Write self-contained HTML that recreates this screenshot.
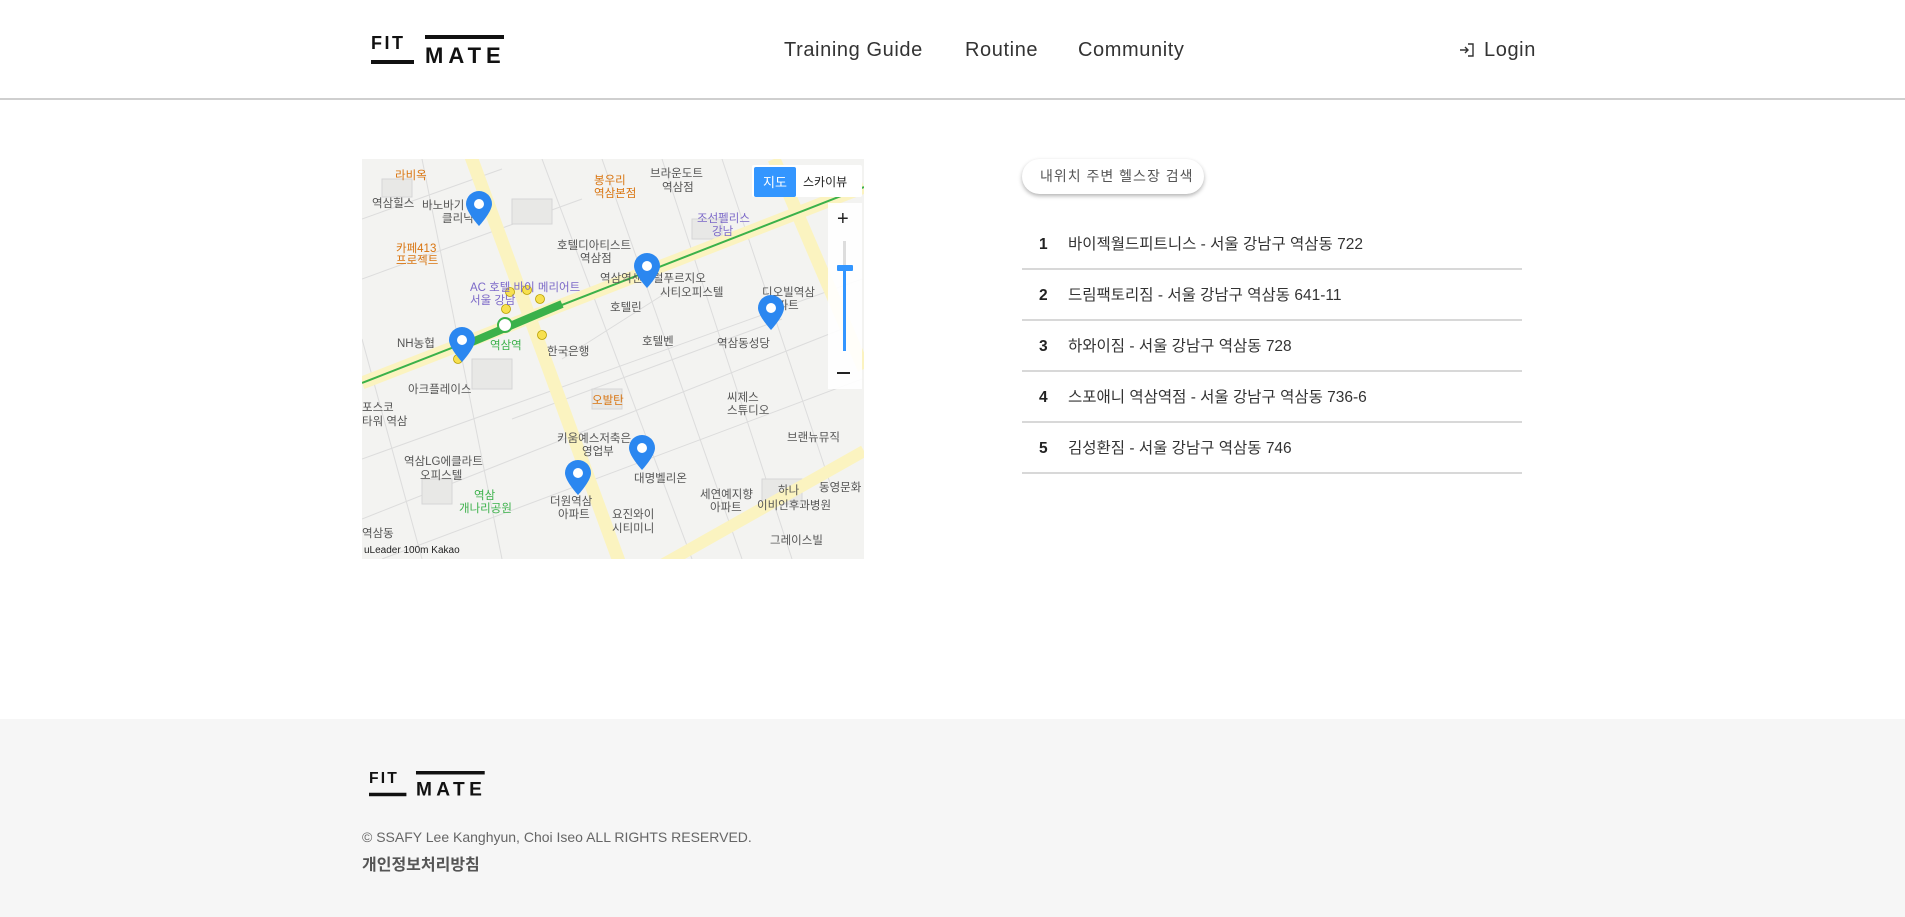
<!DOCTYPE html>
<html><head><meta charset="utf-8"><style>
*{margin:0;padding:0;box-sizing:border-box}
body{width:1905px;height:917px;overflow:hidden;background:#fff;font-family:"Liberation Sans","Noto Sans CJK KR",sans-serif;position:relative;color:#222}
.abs{position:absolute}
header{position:absolute;left:0;top:0;width:1905px;height:100px;border-bottom:2px solid #cfcfcf}
.logo{position:absolute;width:135px;height:32px}
.logo .fit{position:absolute;left:0;top:-2px;font-weight:bold;font-size:18px;letter-spacing:2.5px;color:#111}
.logo .ul{position:absolute;left:0;top:25px;width:43px;height:4px;background:#111}
.logo .ol{position:absolute;left:54px;top:0;width:79px;height:4px;background:#111}
.logo .mate{position:absolute;left:54px;top:10px;font-weight:bold;font-size:22px;letter-spacing:5px;color:#111;line-height:22px}
.nav{position:absolute;top:39px;font-size:20px;color:#333;letter-spacing:0.6px}
.btn{position:absolute;left:1022px;top:159px;width:182px;height:35px;border-radius:18px;background:#fff;box-shadow:0 2px 4px rgba(0,0,0,.3);font-size:14px;color:#555;line-height:35px;padding-left:18px;letter-spacing:1px}
.row{position:absolute;left:1022px;width:500px;height:51px;border-bottom:2px solid #d8d8d8;font-size:15.5px;color:#333;line-height:51px}
.row b{position:absolute;left:17px;font-weight:bold;color:#222}
.row span{position:absolute;left:46px}
footer{position:absolute;left:0;top:719px;width:1905px;height:198px;background:#f6f6f6}
.map text{font-family:"Liberation Sans","Noto Sans CJK KR",sans-serif}
</style></head><body>
<header>
<div class="logo" style="left:371px;top:35px"><div class="fit">FIT</div><div class="ul"></div><div class="ol"></div><div class="mate">MATE</div></div>
<div class="nav" style="left:784px">Training Guide</div>
<div class="nav" style="left:965px">Routine</div>
<div class="nav" style="left:1078px">Community</div>
<svg class="abs" style="left:1459px;top:42px" width="16" height="16" viewBox="0 0 16 16" fill="none" stroke="#333" stroke-width="1.4"><path d="M1 8h8M6 5l3 3-3 3M9 2h5v12H9"/></svg>
<div class="nav" style="left:1484px">Login</div>
</header>

<svg class="abs map" style="left:362px;top:159px" width="502" height="400" viewBox="0 0 502 400">
<rect width="502" height="400" fill="#f3f3f1"/>
<g stroke="#dcdcdc" stroke-width="1" fill="none">
<path d="M0 60L140 10M0 120L220 40M0 300L500 120M20 400L500 220M0 360L480 170M180 0L330 400M240 0L380 400M300 0L430 400M360 0L470 330M60 0L140 400M0 180L60 400M200 200L310 130M150 260L420 160"/>
</g>
<g fill="#e8e8e6" stroke="#d6d6d6">
<rect x="20" y="20" width="30" height="18"/><rect x="150" y="40" width="40" height="25"/><rect x="330" y="60" width="30" height="20"/><rect x="400" y="320" width="40" height="25"/><rect x="60" y="320" width="30" height="25"/><rect x="230" y="230" width="30" height="20"/><rect x="110" y="200" width="40" height="30"/>
</g>
<path d="M108 -5L258 405" stroke="#fbf3c0" stroke-width="13"/>
<path d="M412 0L502 210" stroke="#fbf3c0" stroke-width="13"/>
<path d="M0 224L502 28" stroke="#fbf3c0" stroke-width="13"/>
<path d="M0 224L502 28" stroke="#3bb14a" stroke-width="2"/>
<path d="M300 406L502 292" stroke="#fbf3c0" stroke-width="12"/>
<path d="M110 183L200 145" stroke="#3bb14a" stroke-width="8"/>
<circle cx="143" cy="166" r="7" fill="#fff" stroke="#3bb14a" stroke-width="2"/>
<g fill="#f7e050" stroke="#b9a000" stroke-width=".8"><circle cx="148" cy="133" r="4.5"/><circle cx="165" cy="131" r="4.5"/><circle cx="178" cy="140" r="4.5"/><circle cx="144" cy="150" r="4.5"/><circle cx="180" cy="176" r="4.5"/><circle cx="96" cy="200" r="4.5"/></g>
<g font-size="11.5" fill="#555">
<text x="10" y="48">역삼힐스</text><text x="60" y="50">바노바기</text><text x="80" y="63">클리닉</text>
<text x="195" y="90">호텔디아티스트</text><text x="218" y="103">역삼점</text>
<text x="288" y="18">브라운도트</text><text x="300" y="32">역삼점</text>
<text x="238" y="123">역삼역센트럴푸르지오</text><text x="298" y="137">시티오피스텔</text>
<text x="248" y="152">호텔린</text><text x="280" y="186">호텔벤</text><text x="355" y="188">역삼동성당</text>
<text x="185" y="196">한국은행</text><text x="46" y="234">아크플레이스</text><text x="0" y="252">포스코</text><text x="0" y="266">타워 역삼</text>
<text x="42" y="306">역삼LG에클라트</text><text x="58" y="320">오피스텔</text>
<text x="195" y="283">키움예스저축은</text><text x="220" y="296">영업부</text><text x="272" y="323">대명벨리온</text>
<text x="188" y="346">더원역삼</text><text x="196" y="359">아파트</text><text x="250" y="359">요진와이</text><text x="250" y="373">시티미니</text>
<text x="338" y="339">세연예지향</text><text x="348" y="352">아파트</text><text x="395" y="350">이비인후과병원</text><text x="416" y="335">하나</text><text x="457" y="332">동영문화</text>
<text x="408" y="385">그레이스빌</text><text x="0" y="378">역삼동</text><text x="365" y="242">씨제스</text><text x="365" y="255">스튜디오</text><text x="425" y="282">브랜뉴뮤직</text>
<text x="405" y="150">아파트</text><text x="400" y="137">디오빌역삼</text><text x="35" y="188">NH농협</text>
</g>
<g font-size="11.5" fill="#d9740f"><text x="33" y="20">라비옥</text><text x="232" y="25">봉우리</text><text x="232" y="38">역삼본점</text><text x="34" y="93">카페413</text><text x="34" y="105">프로젝트</text><text x="230" y="245">오발탄</text></g>
<g font-size="11.5" fill="#7b68c8"><text x="108" y="132">AC 호텔 바이 메리어트</text><text x="108" y="145">서울 강남</text><text x="335" y="63">조선펠리스</text><text x="350" y="76">강남</text></g>
<g font-size="11.5" fill="#3bb14a"><text x="128" y="190">역삼역</text><text x="112" y="340">역삼</text><text x="97" y="353">개나리공원</text></g>
<text x="2" y="394" font-size="10" fill="#222">uLeader 100m  Kakao</text>
<g fill="#2b87f0">
<g transform="translate(117,45)"><path d="M-13 0a13 13 0 0 1 26 0c0 8-13 22-13 22S-13 8-13 0z"/><circle r="5" fill="#fff"/></g>
<g transform="translate(285,107)"><path d="M-13 0a13 13 0 0 1 26 0c0 8-13 22-13 22S-13 8-13 0z"/><circle r="5" fill="#fff"/></g>
<g transform="translate(409,149)"><path d="M-13 0a13 13 0 0 1 26 0c0 8-13 22-13 22S-13 8-13 0z"/><circle r="5" fill="#fff"/></g>
<g transform="translate(100,181)"><path d="M-13 0a13 13 0 0 1 26 0c0 8-13 22-13 22S-13 8-13 0z"/><circle r="5" fill="#fff"/></g>
<g transform="translate(280,289)"><path d="M-13 0a13 13 0 0 1 26 0c0 8-13 22-13 22S-13 8-13 0z"/><circle r="5" fill="#fff"/></g>
<g transform="translate(216,314)"><path d="M-13 0a13 13 0 0 1 26 0c0 8-13 22-13 22S-13 8-13 0z"/><circle r="5" fill="#fff"/></g>
</g>
<rect x="390" y="6" width="110" height="32" rx="2" fill="#fff"/>
<rect x="392" y="8" width="42" height="30" rx="2" fill="#3396ff"/>
<text x="401" y="28" font-size="13" fill="#fff">지도</text><text x="441" y="27" font-size="12" fill="#222">스카이뷰</text>
<rect x="466" y="44" width="34" height="186" fill="#fff" opacity=".9"/>
<text x="475" y="66" font-size="20" fill="#222">+</text>
<rect x="481" y="82" width="3" height="110" fill="#ddd"/><rect x="481" y="110" width="3" height="82" fill="#3396ff"/><rect x="475" y="106" width="16" height="6" rx="1" fill="#3396ff"/>
<rect x="475" y="213" width="13" height="2" fill="#222"/>
</svg>

<div class="btn">내위치 주변 헬스장 검색</div>
<div class="row" style="top:219px"><b>1</b><span>바이젝월드피트니스 - 서울 강남구 역삼동 722</span></div>
<div class="row" style="top:270px"><b>2</b><span>드림팩토리짐 - 서울 강남구 역삼동 641-11</span></div>
<div class="row" style="top:321px"><b>3</b><span>하와이짐 - 서울 강남구 역삼동 728</span></div>
<div class="row" style="top:372px"><b>4</b><span>스포애니 역삼역점 - 서울 강남구 역삼동 736-6</span></div>
<div class="row" style="top:423px"><b>5</b><span>김성환짐 - 서울 강남구 역삼동 746</span></div>

<footer>
<div class="logo" style="left:369px;top:52px;transform:scale(0.87);transform-origin:0 0"><div class="fit">FIT</div><div class="ul"></div><div class="ol"></div><div class="mate">MATE</div></div>
<div class="abs" style="left:362px;top:110px;font-size:14px;color:#666">© SSAFY Lee Kanghyun, Choi Iseo ALL RIGHTS RESERVED.</div>
<div class="abs" style="left:362px;top:132px;font-size:16px;color:#555;font-weight:bold">개인정보처리방침</div>
</footer>
</body></html>
